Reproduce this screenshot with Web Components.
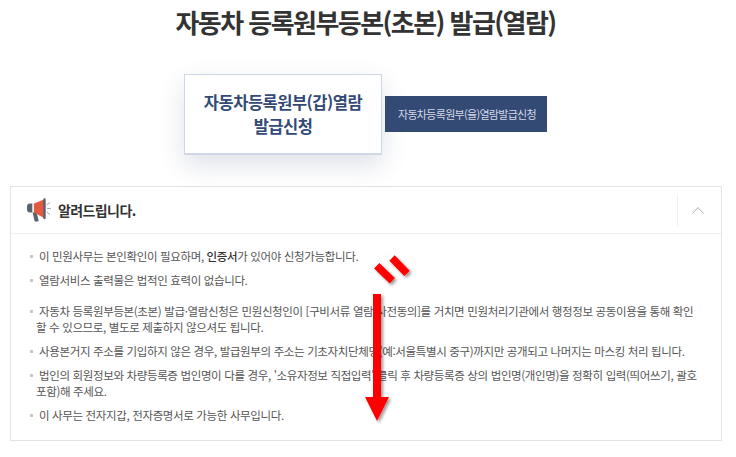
<!DOCTYPE html>
<html lang="ko">
<head>
<meta charset="utf-8">
<style>
    html, body { margin: 0; background: #fff; }
    body { font-family: "Noto Sans CJK KR", "Noto Sans", sans-serif; width: 736px; height: 457px; overflow: hidden; position: relative; }
</style>
</head>
<body>
<page-title>자동차 등록원부등본(초본) 발급(열람)</page-title>
<apply-tabs></apply-tabs>
<notice-box heading="알려드립니다.">
    <notice-item>이 민원사무는 본인확인이 필요하며, <b>인증서</b>가 있어야 신청가능합니다.</notice-item>
    <notice-item>열람서비스 출력물은 법적인 효력이 없습니다.</notice-item>
    <notice-item gap="15">자동차 등록원부등본(초본) 발급·열람신청은 민원신청인이 [구비서류 열람 사전동의]를 거치면 민원처리기관에서 행정정보 공동이용을 통해 확인 할 수 있으므로, 별도로 제출하지 않으셔도 됩니다.</notice-item>
    <notice-item>사용본거지 주소를 기입하지 않은 경우, 발급원부의 주소는 기초자치단체명(예:서울특별시 중구)까지만 공개되고 나머지는 마스킹 처리 됩니다.</notice-item>
    <notice-item>법인의 회원정보와 차량등록증 법인명이 다를 경우, '소유자정보 직접입력' 클릭 후 차량등록증 상의 법인명(개인명)을 정확히 입력(띄어쓰기, 괄호 포함)해 주세요.</notice-item>
    <notice-item>이 사무는 전자지갑, 전자증명서로 가능한 사무입니다.</notice-item>
</notice-box>
<scroll-mark></scroll-mark>

<script>
class PageTitle extends HTMLElement {
    constructor() {
        super();
        this.attachShadow({mode: "open"});
        this.shadowRoot.innerHTML = `
        <style>
            :host { display: block; height: 74px; text-align: center; }
            h1 {
                margin: 0;
                padding-top: 4px;
                padding-right: 5px;
                font-size: 26px;
                line-height: 36px;
                font-weight: 700;
                letter-spacing: -1.55px;
                color: #333;
            }
        </style>
        <h1><slot></slot></h1>
        `;
    }
}
customElements.define("page-title", PageTitle);

class ApplyTabs extends HTMLElement {
    constructor() {
        super();
        this.attachShadow({mode: "open"});
        this.shadowRoot.innerHTML = `
        <style>
            :host { display: flex; height: 112px; padding-left: 184px; align-items: flex-start; }
            .card {
                box-sizing: border-box;
                width: 198px;
                height: 81px;
                border: 1px solid #cfd6e6;
                border-bottom-width: 2px;
                background: #fff;
                box-shadow: 0 10px 24px rgba(50, 70, 120, 0.16);
                display: flex;
                align-items: center;
                justify-content: center;
                text-align: center;
                color: #334a75;
                font-size: 16.500px;
                line-height: 24px;
                font-weight: 700;
                letter-spacing: -0.5px;
            }
            .btn {
                box-sizing: border-box;
                width: 162px;
                height: 36px;
                margin: 22px 0 0 3px;
                padding-left: 2px;
                background: #334a75;
                color: #d3d9e5;
                font-size: 11px;
                line-height: 36px;
                text-align: center;
                letter-spacing: -0.7px;
            }
        </style>
        <div class="card"><span>자동차등록원부(갑)열람<br>발급신청</span></div>
        <div class="btn">자동차등록원부(을)열람발급신청</div>
        `;
    }
}
customElements.define("apply-tabs", ApplyTabs);

class NoticeBox extends HTMLElement {
    constructor() {
        super();
        this.attachShadow({mode: "open"});
        this.shadowRoot.innerHTML = `
        <style>
            :host {
                display: block;
                box-sizing: border-box;
                width: 712px;
                height: 255px;
                margin-left: 10px;
                border: 1px solid #e3e3e3;
            }
            header {
                height: 46px;
                border-bottom: 1px solid #f0f0f0;
                display: flex;
                align-items: center;
                padding-left: 15px;
            }
            svg.horn { width: 28px; height: 26px; flex: none; }
            h2 {
                margin: 0 0 0 4px;
                font-size: 14px;
                font-weight: 700;
                letter-spacing: -0.6px;
                color: #333;
                flex: 1;
            }
            .toggle {
                width: 40px;
                height: 32px;
                padding-right: 3px;
                border-left: 1px solid #f0f0f0;
                display: flex;
                align-items: center;
                justify-content: center;
            }
            ul { margin: 0; padding: 14px 20px 0 19px; list-style: none; }
        </style>
        <header>
            <svg class="horn" viewBox="0 0 28 26">
                <path d="M6.500 15h4l2 8a1 1 0 0 1-1 1.500H9.500a1 1 0 0 1-1-.8z" fill="#5a6470"/>
                <path d="M4 6.500H6.500v9H4A3 3 0 0 1 1 12.500v-3a3 3 0 0 1 3-3z" fill="#5a6470"/>
                <path d="M6.500 6.500h1.500v9H6.500z" fill="#f1eeea"/>
                <path d="M8 6.500 L18 2.500 V21 L8 15.500z" fill="#e4593f"/>
                <path d="M17.300 2.500a1.200 1.200 0 0 1 2.400 0V21a1.200 1.200 0 0 1-2.400 0z" fill="#5a6470"/>
                <path d="M20.500 8l3.500-2.500M21 11.500h4M20.500 15l3.500 2.500" stroke="#a5adb6" stroke-width="1" fill="none"/>
            </svg>
            <h2></h2>
            <div class="toggle">
                <svg width="12" height="8" viewBox="0 0 12 8"><path d="M.5 7.500l5.500-6 5.500 6" fill="none" stroke="#b0b0b0" stroke-width="1"/></svg>
            </div>
        </header>
        <ul><slot></slot></ul>
        `;
    }
    connectedCallback() {
        this.shadowRoot.querySelector("h2").textContent = this.getAttribute("heading");
    }
}
customElements.define("notice-box", NoticeBox);

class NoticeItem extends HTMLElement {
    constructor() {
        super();
        this.attachShadow({mode: "open"});
        this.shadowRoot.innerHTML = `
        <style>
            :host {
                display: block;
                position: relative;
                padding-left: 6px;
                margin-bottom: 8px;
                text-indent: 3px;
                font-size: 11.500px;
                line-height: 16px;
                letter-spacing: -0.36px;
                color: #555;
            }
            :host::before {
                content: "";
                position: absolute;
                left: 0;
                top: 7px;
                width: 3px;
                height: 3px;
                background: #c8c8c8;
            }
            ::slotted(b) { color: #333; font-weight: 500; }
        </style>
        <slot></slot>
        `;
    }
    connectedCallback() {
        if (this.hasAttribute("gap")) this.style.marginTop = this.getAttribute("gap") + "px";
    }
}
customElements.define("notice-item", NoticeItem);

// red marks drawn over the page
class ScrollMark extends HTMLElement {
    constructor() {
        super();
        this.attachShadow({mode: "open"});
        this.shadowRoot.innerHTML = `
        <style>
            :host { position: absolute; left: 355px; top: 250px; width: 65px; height: 180px; }
        </style>
        <svg width="65" height="180" viewBox="0 0 65 180">
            <defs>
                <filter id="s" x="-50%" y="-20%" width="200%" height="140%">
                    <feDropShadow dx="2" dy="2" stdDeviation="1.500" flood-color="#000" flood-opacity="0.4"/>
                </filter>
            </defs>
            <g filter="url(#s)">
                <path d="M18 44h8v103h-8z" fill="#f00"/>
                <path d="M10 147h24l-12 24z" fill="#f00"/>
                <path d="M21.700 15.700L37.300 30.700M37 8L52 23.300" stroke="#f00" stroke-width="7.500" fill="none"/>
            </g>
        </svg>
        `;
    }
}
customElements.define("scroll-mark", ScrollMark);
</script>
</body>
</html>
